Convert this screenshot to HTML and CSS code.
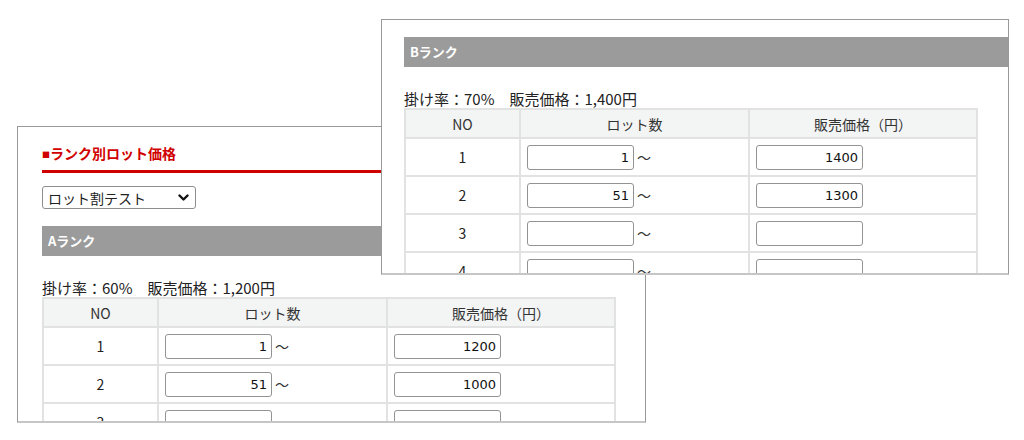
FILE: index.html
```html
<!DOCTYPE html>
<html lang="ja">
<head>
<meta charset="utf-8">
<title>ランク別ロット価格</title>
<link rel="stylesheet" href="styles.css">
</head>
<body>
<div class="canvas">
  <div class="win win-a">
    <div class="page page-a">
      <h2 class="title"><span class="sq">■</span>ランク別ロット価格</h2>
      <div class="select">
        <span>ロット割テスト</span>
        <svg class="chev" width="11" height="8" viewBox="0 0 11 8"><path d="M1.5 1.5 L5.5 5.5 L9.5 1.5" fill="none" stroke="#111" stroke-width="2.4" stroke-linecap="round" stroke-linejoin="round"/></svg>
      </div>
      <section class="rank">
        <div class="rank-bar">Aランク</div>
        <p class="rate">掛け率：60%　販売価格：1,200円</p>
        <table class="lots">
          <colgroup><col class="c-no"><col class="c-lot"><col class="c-price"></colgroup>
          <tr><th>NO</th><th>ロット数</th><th>販売価格（円）</th></tr>
          <tr><td>1</td><td class="in"><input class="num" value="1"><span class="tilde">〜</span></td><td class="in"><input class="num" value="1200"></td></tr>
          <tr><td>2</td><td class="in"><input class="num" value="51"><span class="tilde">〜</span></td><td class="in"><input class="num" value="1000"></td></tr>
          <tr><td>3</td><td class="in"><input class="num" value=""><span class="tilde">〜</span></td><td class="in"><input class="num" value=""></td></tr>
        </table>
      </section>
    </div>
  </div>

  <div class="win win-b">
    <div class="page page-b">
      <section class="rank rank-b">
        <div class="rank-bar">Bランク</div>
        <p class="rate">掛け率：70%　販売価格：1,400円</p>
        <table class="lots">
          <colgroup><col class="c-no"><col class="c-lot"><col class="c-price"></colgroup>
          <tr><th>NO</th><th>ロット数</th><th>販売価格（円）</th></tr>
          <tr><td>1</td><td class="in"><input class="num" value="1"><span class="tilde">〜</span></td><td class="in"><input class="num" value="1400"></td></tr>
          <tr><td>2</td><td class="in"><input class="num" value="51"><span class="tilde">〜</span></td><td class="in"><input class="num" value="1300"></td></tr>
          <tr><td>3</td><td class="in"><input class="num" value=""><span class="tilde">〜</span></td><td class="in"><input class="num" value=""></td></tr>
          <tr><td>4</td><td class="in"><input class="num" value=""><span class="tilde">〜</span></td><td class="in"><input class="num" value=""></td></tr>
        </table>
      </section>
    </div>
  </div>
</div>
</body>
</html>
```

FILE: styles.css
```css
html, body {
  margin: 0;
  padding: 0;
  background: #fff;
}

body {
  font-family: "Noto Sans CJK JP", "Noto Sans", sans-serif;
  color: #333;
}

.canvas {
  position: relative;
  width: 1024px;
  height: 440px;
  overflow: hidden;
  background: #fff;
}

.win {
  position: absolute;
  box-sizing: border-box;
  background: #fff;
  border: 1px solid #999;
  border-bottom: 2px solid #c6c6c6;
  overflow: hidden;
}

.win-a {
  left: 17px;
  top: 126px;
  width: 629px;
  height: 297px;
  z-index: 1;
}

.win-b {
  left: 381px;
  top: 19px;
  width: 628px;
  height: 256px;
  z-index: 2;
}

.page {
  width: 900px;
  padding-top: 17px;
}

.page-a {
  padding-left: 24px;
}

.page-b {
  padding-left: 22px;
}

.title {
  margin: 0;
  width: 580px;
  font-size: 14px;
  line-height: 18px;
  font-weight: bold;
  color: #d10000;
  padding-bottom: 6px;
  border-bottom: 3px solid #d10000;
}

.sq {
  font-size: 8px;
  vertical-align: 1px;
}

.select {
  margin-top: 13px;
  box-sizing: border-box;
  width: 154px;
  height: 23px;
  border: 1px solid #8e8e8e;
  border-radius: 3px;
  display: flex;
  align-items: center;
  justify-content: space-between;
  padding: 0 6px 0 5px;
  font-size: 14px;
  line-height: 20px;
  color: #222;
}

.chev {
  display: block;
}

.rank {
  margin-top: 17px;
}

.rank-b {
  margin-top: 0;
}

.rank-bar {
  height: 30px;
  line-height: 30px;
  background: #9b9b9b;
  color: #fff;
  font-weight: bold;
  font-size: 13px;
  padding-left: 6px;
}

.rate {
  margin: 23px 0 0;
  font-size: 15px;
  line-height: 18px;
  color: #222;
}

.lots {
  border-collapse: collapse;
  table-layout: fixed;
  width: 572px;
  font-size: 14px;
}

.c-no { width: 115px; }
.c-lot { width: 229px; }
.c-price { width: 228px; }

.lots th,
.lots td {
  border: 2px solid #e2e2e2;
  text-align: center;
  vertical-align: middle;
  padding: 0;
}

.lots th {
  height: 27px;
  background: #f3f4f4;
  font-weight: normal;
  color: #333;
}

.lots td {
  height: 36px;
  color: #222;
}

.lots td.in {
  text-align: left;
  padding-left: 6px;
  white-space: nowrap;
}

.num {
  box-sizing: border-box;
  width: 107px;
  height: 25px;
  border: 1px solid #939393;
  border-radius: 3px;
  padding: 0 4px;
  text-align: right;
  font-family: "DejaVu Sans", sans-serif;
  font-size: 13px;
  color: #111;
  background: #fff;
  vertical-align: middle;
  margin: 0;
}

.tilde {
  margin-left: 3px;
  font-size: 14px;
  vertical-align: middle;
  color: #333;
}
```
